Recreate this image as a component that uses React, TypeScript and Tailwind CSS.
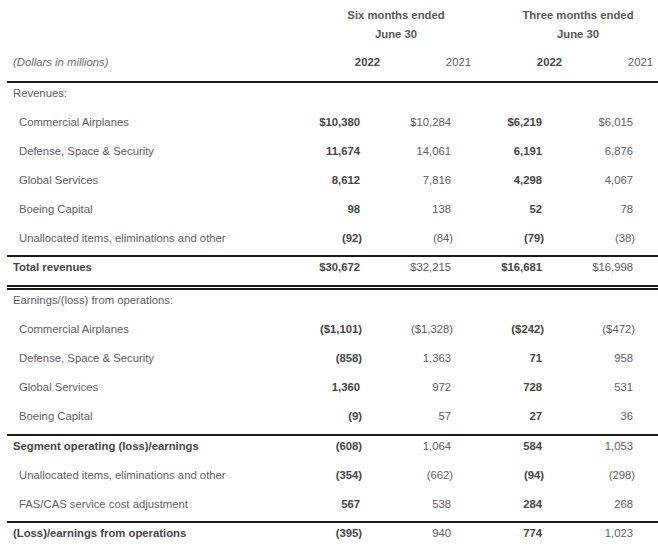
import React from "react";

type Row = {
  label: string;
  vals: [string, string, string, string];
  indent?: boolean;
  bold?: boolean;
  border?: "single" | "double" | "none";
  pull?: boolean;
};

const rows: Row[] = [
  { label: "Revenues:", vals: ["", "", "", ""], border: "single" },
  { label: "Commercial Airplanes", vals: ["$10,380", "$10,284", "$6,219", "$6,015"], indent: true },
  { label: "Defense, Space & Security", vals: ["11,674", "14,061", "6,191", "6,876"], indent: true },
  { label: "Global Services", vals: ["8,612", "7,816", "4,298", "4,067"], indent: true },
  { label: "Boeing Capital", vals: ["98", "138", "52", "78"], indent: true },
  { label: "Unallocated items, eliminations and other", vals: ["(92)", "(84)", "(79)", "(38)"], indent: true },
  { label: "Total revenues", vals: ["$30,672", "$32,215", "$16,681", "$16,998"], bold: true, border: "single", pull: true },
  { label: "Earnings/(loss) from operations:", vals: ["", "", "", ""], border: "double" },
  { label: "Commercial Airplanes", vals: ["($1,101)", "($1,328)", "($242)", "($472)"], indent: true },
  { label: "Defense, Space & Security", vals: ["(858)", "1,363", "71", "958"], indent: true },
  { label: "Global Services", vals: ["1,360", "972", "728", "531"], indent: true },
  { label: "Boeing Capital", vals: ["(9)", "57", "27", "36"], indent: true },
  { label: "Segment operating (loss)/earnings", vals: ["(608)", "1,064", "584", "1,053"], bold: true, border: "single" },
  { label: "Unallocated items, eliminations and other", vals: ["(354)", "(662)", "(94)", "(298)"], indent: true },
  { label: "FAS/CAS service cost adjustment", vals: ["567", "538", "284", "268"], indent: true },
  { label: "(Loss)/earnings from operations", vals: ["(395)", "940", "774", "1,023"], bold: true, border: "single", pull: true },
];

const grid = "grid grid-cols-[298px_91px_91px_91px_91px]";

function Cell({ v, strong }: { v: string; strong: boolean }) {
  const neg = v.endsWith(")");
  return (
    <div
      className={`text-right leading-4 ${neg ? "pr-[34px]" : "pr-[36px]"} ${
        strong ? "font-bold text-[#464646]" : "text-[#5e5e5e]"
      }`}
    >
      {v}
    </div>
  );
}

export default function App() {
  return (
    <div
      className="w-[658px] h-[546px] overflow-hidden bg-white pl-[7px]"
      style={{ fontFamily: '"Liberation Sans", Arial, sans-serif' }}
    >
      <div className="w-[662px] text-[11.3px]">
        {/* Header */}
        <div className={`${grid} content-start pt-[7px] h-[81px]`}>
          <div className="row-start-3 col-start-1 pl-[6px] italic text-[#6a6a6a] leading-4 mt-[12px]">
            (Dollars in millions)
          </div>
          <div className="row-start-1 col-start-2 col-span-2 text-center font-bold text-[#585858] leading-4">
            Six months ended
          </div>
          <div className="row-start-1 col-start-4 col-span-2 text-center font-bold text-[#585858] leading-4">
            Three months ended
          </div>
          <div className="row-start-2 col-start-2 col-span-2 text-center font-bold text-[#585858] leading-4 mt-[3px]">
            June 30
          </div>
          <div className="row-start-2 col-start-4 col-span-2 text-center font-bold text-[#585858] leading-4 mt-[3px]">
            June 30
          </div>
          <div className="row-start-3 col-start-2 text-right pr-[16px] font-bold text-[#464646] leading-4 mt-[12px]">
            2022
          </div>
          <div className="row-start-3 col-start-3 text-right pr-[16px] text-[#5e5e5e] leading-4 mt-[12px]">
            2021
          </div>
          <div className="row-start-3 col-start-4 text-right pr-[16px] font-bold text-[#464646] leading-4 mt-[12px]">
            2022
          </div>
          <div className="row-start-3 col-start-5 text-right pr-[16px] text-[#5e5e5e] leading-4 mt-[12px]">
            2021
          </div>
        </div>

        {/* Body */}
        {rows.map((r, i) => {
          const b = r.border ?? "none";
          const cls =
            b === "single"
              ? `border-t-2 border-[#1a1a1a] pt-[2px] pb-[10px] ${r.pull ? "-mt-px" : ""}`
              : b === "double"
              ? "border-t-[5px] border-double border-[#1a1a1a] pt-[2px] pb-[10px]"
              : "pt-[3px] pb-[10px]";
          return (
            <div key={i} className={`${grid} ${cls}`}>
              <div
                className={`leading-4 ${r.indent ? "pl-[12px]" : "pl-[6px]"} ${
                  r.bold ? "font-bold text-[#464646]" : "text-[#5e5e5e]"
                }`}
              >
                {r.label}
              </div>
              <Cell v={r.vals[0]} strong={true} />
              <Cell v={r.vals[1]} strong={false} />
              <Cell v={r.vals[2]} strong={true} />
              <Cell v={r.vals[3]} strong={false} />
            </div>
          );
        })}
      </div>
    </div>
  );
}
